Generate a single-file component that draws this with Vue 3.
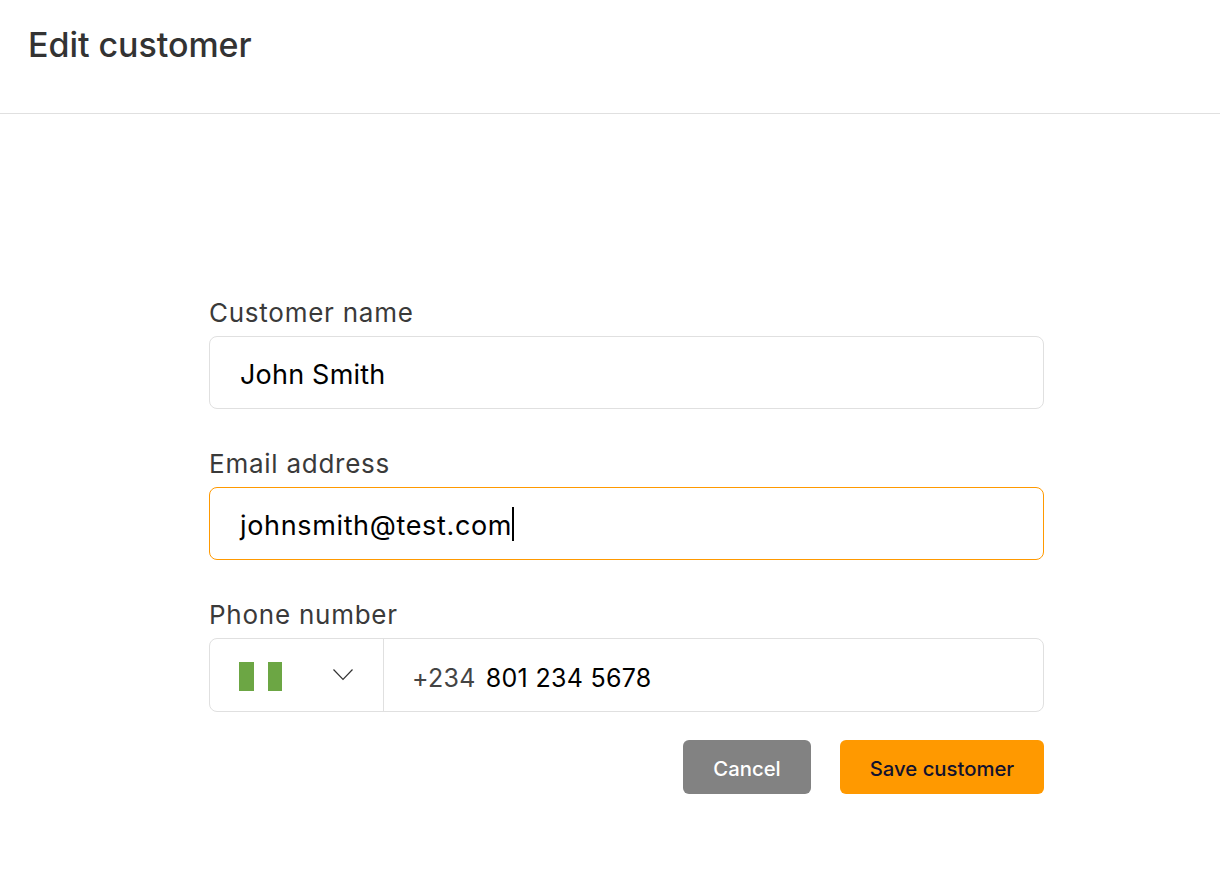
<template>
  <div class="page">
    <header class="page-header">
      <h1 class="page-title">Edit customer</h1>
    </header>

    <form class="customer-form" @submit.prevent>
      <div class="field-group">
        <label class="field-label">Customer name</label>
        <div class="field-input"><span class="field-text">{{ customer.name }}</span></div>
      </div>

      <div class="field-group">
        <label class="field-label">Email address</label>
        <div class="field-input focused">
          <span class="field-text">{{ customer.email }}</span><span class="caret"></span>
        </div>
      </div>

      <div class="field-group">
        <label class="field-label">Phone number</label>
        <div class="field-input phone">
          <div class="country-select">
            <span class="flag">
              <span class="flag-stripe"></span>
              <span class="flag-stripe"></span>
            </span>
            <svg class="chevron" width="20" height="12" viewBox="0 0 20 12" fill="none">
              <path d="M0.5 0.5 L10 10.5 L19.5 0.5" stroke="#333" stroke-width="1.2" />
            </svg>
          </div>
          <div class="phone-value">
            <span class="dial-code">{{ customer.dialCode }}</span>
            <span>{{ customer.phone }}</span>
          </div>
        </div>
      </div>

      <div class="form-actions">
        <button type="button" class="btn btn-cancel">Cancel</button>
        <button type="submit" class="btn btn-save">Save customer</button>
      </div>
    </form>
  </div>
</template>

<script setup>
const customer = {
  name: 'John Smith',
  email: 'johnsmith@test.com',
  dialCode: '+234',
  phone: '801 234 5678'
}
</script>

<style>
html,
body {
  margin: 0;
  background: #fff;
}
</style>

<style scoped>
.page {
  min-height: 888px;
  background: #fff;
  font-family: Inter, "Noto Sans", sans-serif;
  color: #333;
}

.page-header {
  height: 113px;
  padding-left: 28px;
  border-bottom: 1px solid #e0e0e0;
}

.page-title {
  margin: 0;
  padding-top: 25px;
  font-size: 34px;
  line-height: 40px;
  font-weight: 450;
  letter-spacing: -0.05px;
}

.customer-form {
  width: 835px;
  margin-left: 209px;
  padding-top: 184px;
}

.field-group {
  margin-bottom: 40px;
}

.field-label {
  display: block;
  font-size: 26px;
  line-height: 30px;
  letter-spacing: 0.75px;
  margin-bottom: 8px;
  color: #3a3a3a;
}

.field-input {
  box-sizing: border-box;
  height: 73px;
  padding-left: 30px;
  display: flex;
  align-items: center;
  border: 1px solid #e0e0e0;
  border-radius: 8px;
  font-size: 27px;
  letter-spacing: 0.2px;
  color: #000;
}

.field-text {
  padding-top: 3px;
}

.field-input.focused {
  border-color: #f90;
  letter-spacing: 0.65px;
}

.caret {
  width: 2px;
  height: 34px;
  background: #000;
}

.field-input.phone {
  height: 74px;
  padding-left: 0;
  font-size: 25px;
  letter-spacing: 0.3px;
}

.country-select {
  width: 174px;
  height: 100%;
  box-sizing: border-box;
  padding: 0 30px 0 29px;
  display: flex;
  align-items: center;
  justify-content: space-between;
  border-right: 1px solid #e0e0e0;
}

.flag {
  display: flex;
  gap: 14px;
  padding-top: 3px;
}

.flag-stripe {
  width: 14.5px;
  height: 29px;
  background: #6ca644;
}

.phone-value {
  padding: 5px 0 0 28px;
  display: flex;
  gap: 10px;
}

.dial-code {
  color: #444;
}

.form-actions {
  display: flex;
  justify-content: flex-end;
  gap: 29px;
  margin-top: -12px;
}

.btn {
  height: 54px;
  padding-top: 4px;
  border: none;
  border-radius: 6px;
  font-family: inherit;
  font-size: 20.3px;
  font-weight: 500;
  cursor: pointer;
}

.btn-cancel {
  width: 128px;
  background: #828282;
  color: #fff;
}

.btn-save {
  width: 204px;
  background: #f90;
  color: #12122e;
}
</style>
